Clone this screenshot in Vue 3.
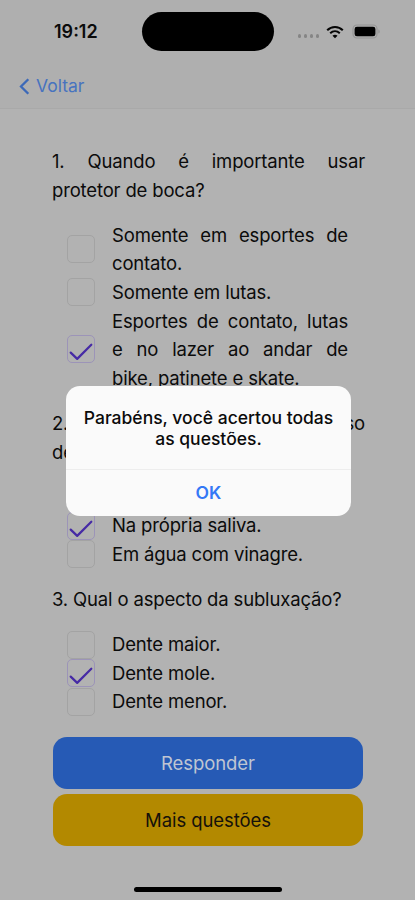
<script setup>
const questions = [
  {
    lines: [{ text: '1. Quando é importante usar', fill: true }, { text: 'protetor de boca?' }],
    options: [
      { lines: [{ text: 'Somente em esportes de', fill: true }, { text: 'contato.' }] },
      { lines: [{ text: 'Somente em lutas.' }] },
      {
        checked: true,
        lines: [
          { text: 'Esportes de contato, lutas', fill: true },
          { text: 'e no lazer ao andar de', fill: true },
          { text: 'bike, patinete e skate.' },
        ],
      },
    ],
  },
  {
    lines: [{ text: '2. uso', fill: true }, { text: 'de' }],
    options: [
      { lines: [{ text: '' }] },
      { checked: true, lines: [{ text: 'Na própria saliva.' }] },
      { lines: [{ text: 'Em água com vinagre.' }] },
    ],
  },
  {
    lines: [{ text: '3. Qual o aspecto da subluxação?' }],
    options: [
      { lines: [{ text: 'Dente maior.' }] },
      { checked: true, lines: [{ text: 'Dente mole.' }] },
      { lines: [{ text: 'Dente menor.' }] },
    ],
  },
]
</script>

<template>
  <div class="screen">
    <header class="top">
      <div class="status">
        <span class="time">19:12</span>
        <span class="island"></span>
        <div class="indicators">
          <span class="dots"><i v-for="n in 4" :key="n"></i></span>
          <svg class="wifi" width="18" height="14" viewBox="0 0 18 14" fill="none" stroke="#050505">
            <path d="M1.2 5.2C5.6 .9 12.4 .9 16.8 5.2" stroke-width="2.1" />
            <path d="M4.2 8.2c2.8-2.6 6.8-2.6 9.6 0" stroke-width="2" />
            <path d="M9 13.2 6.5 10.7c1.5-1.3 3.5-1.3 5 0Z" fill="#050505" stroke="none" />
          </svg>
          <svg class="battery" width="29" height="15" viewBox="0 0 29 15">
            <rect x="1" y="1" width="24" height="13" rx="4" fill="none" stroke="#969696" stroke-width="1.2" />
            <rect x="2.6" y="2.7" width="20.8" height="9.6" rx="2.3" fill="#000" />
            <path d="M26.3 5.4c2 .7 2 3.5 0 4.2Z" fill="#969696" />
          </svg>
        </div>
      </div>
      <nav class="nav">
        <svg width="11" height="17" viewBox="0 0 11 17" fill="none" stroke="#3c69b8" stroke-width="2.3">
          <path d="M9.3 1.2 2 8.5l7.3 7.3" />
        </svg>
        <span>Voltar</span>
      </nav>
    </header>

    <main class="content">
      <section v-for="(q, qi) in questions" :key="qi" class="question">
        <h2 class="title">
          <span v-for="l in q.lines" :key="l.text" class="line" :class="{ fill: l.fill }">{{ l.text }}</span>
        </h2>
        <ul class="options">
          <li v-for="(o, oi) in q.options" :key="oi" class="option">
            <span class="box" :class="{ checked: o.checked }">
              <svg v-if="o.checked" width="26" height="26" viewBox="0 0 26 26" fill="none" stroke="#462aa5" stroke-width="2.2" stroke-linecap="round" stroke-linejoin="round">
                <path d="M2.7 16.6 9.2 22.9 23.3 8.7" />
              </svg>
            </span>
            <span class="label">
              <span v-for="l in o.lines" :key="l.text" class="line" :class="{ fill: l.fill }">{{ l.text }}</span>
            </span>
          </li>
        </ul>
      </section>
      <div class="actions">
        <button class="btn primary">Responder</button>
        <button class="btn warning">Mais questões</button>
      </div>
    </main>
    <div class="home"></div>

    <div class="overlay">
      <div class="dialog" role="alertdialog">
        <p class="message">Parabéns, você acertou todas<br />as questões.</p>
        <button class="ok">OK</button>
      </div>
    </div>
  </div>
</template>

<style>
body {
  margin: 0;
  background: #b2b2b2;
}
</style>

<style scoped>
.screen {
  position: relative;
  display: flex;
  flex-direction: column;
  box-sizing: border-box;
  width: 415px;
  height: 900px;
  overflow: hidden;
  background: #b2b2b2;
  color: #0b0b0b;
  font-family: Inter, "Liberation Sans", sans-serif;
}
.top {
  box-sizing: border-box;
  height: 109px;
  background: #afafaf;
  border-bottom: 1px solid #a9a9a9;
}
.status {
  display: grid;
  grid-template-columns: 142px 132px 1fr;
  align-items: center;
  box-sizing: border-box;
  height: 51px;
  padding-top: 12px;
}
.time {
  padding-left: 54px;
  font-size: 18px;
  font-weight: 600;
}
.island {
  height: 39px;
  border-radius: 20px;
  background: #000;
}
.indicators {
  display: flex;
  align-items: center;
  padding-left: 24px;
}
.dots {
  display: flex;
  gap: 2.8px;
  padding-top: 9px;
  margin-right: 7px;
}
.dots i {
  width: 3.2px;
  height: 3.2px;
  border-radius: 50%;
  background: #858585;
}
.wifi {
  margin-right: 8px;
}
.nav {
  display: flex;
  align-items: center;
  gap: 6px;
  height: 70px;
  padding-left: 19px;
  color: #4773bf;
  font-size: 17.5px;
}
.nav span {
  padding-bottom: 2px;
}
.content {
  width: 313px;
  padding: 38px 0 0 52px;
  font-size: 18.5px;
  line-height: 28.6px;
  letter-spacing: -0.16px;
}
.question {
  margin-bottom: 16.6px;
}
.title {
  margin: 0;
  font: inherit;
}
.line {
  display: block;
  min-height: 28.6px;
  white-space: nowrap;
}
.fill {
  text-align-last: justify;
}
.options {
  margin: 16.6px 0 0;
  padding: 0 17px 0 15px;
  list-style: none;
}
.option {
  display: flex;
  align-items: center;
}
.box {
  box-sizing: border-box;
  flex: none;
  width: 28px;
  height: 28px;
  margin-right: 17px;
  border: 1px solid #a3a3a3;
  border-radius: 5px;
}
.box.checked {
  border-color: #9c94b8;
}
.box svg {
  display: block;
}
.label {
  flex: 1;
}
.actions {
  display: flex;
  flex-direction: column;
  gap: 5px;
  width: 310px;
  padding: 4.2px 0 0 1px;
}
.btn {
  height: 52px;
  padding: 0;
  border: 0;
  border-radius: 14px;
  font: 18.5px Inter, "Liberation Sans", sans-serif;
  letter-spacing: -0.08px;
}
.primary {
  background: #265ab5;
  color: #bfc5d2;
}
.warning {
  background: #b38900;
  color: #15110a;
}
.home {
  width: 148px;
  height: 5px;
  margin: auto auto 8px 134px;
  border-radius: 3px;
  background: #000;
}
.overlay {
  position: absolute;
  inset: 0;
  display: flex;
  justify-content: center;
  align-items: center;
}
.dialog {
  display: flex;
  flex-direction: column;
  width: 285px;
  height: 130px;
  margin: 1px 0 0 2px;
  border-radius: 14px;
  background: #fafafa;
  overflow: hidden;
}
.message {
  box-sizing: border-box;
  height: 83px;
  margin: 0;
  padding-top: 21px;
  text-align: center;
  white-space: nowrap;
  font-size: 17.5px;
  font-weight: 500;
  line-height: 21.5px;
}
.ok {
  flex: 1;
  padding: 0;
  border: 0;
  border-top: 1px solid #ededed;
  background: none;
  color: #3478f6;
  font: 600 17.5px Inter, "Liberation Sans", sans-serif;
}
</style>
